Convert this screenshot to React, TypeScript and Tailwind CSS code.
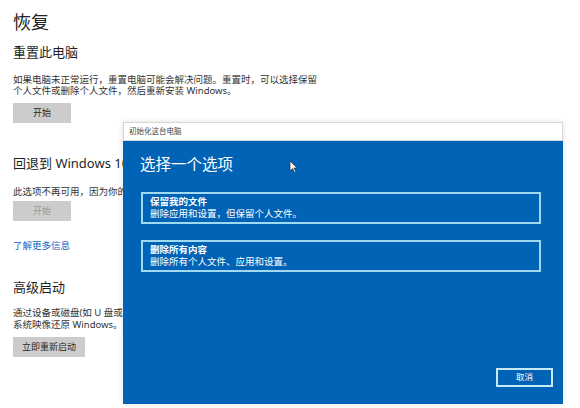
import React from 'react';

const FONT = "font-['Noto_Sans','Noto_Sans_CJK_SC',sans-serif]";

const GrayButton: React.FC<{ label: string; disabled?: boolean; width: string }> = ({ label, disabled, width }) => (
  <div
    className={`${width} h-[20px] flex items-center justify-center bg-[#cccccc] text-[9px] leading-none ${
      disabled ? 'text-[#9a9a9a]' : 'text-[#2a2a2a]'
    }`}
  >
    {label}
  </div>
);

const OptionCard: React.FC<{ title: string; desc: string; mt: string }> = ({ title, desc, mt }) => (
  <div className={`${mt} w-[400px] h-[32px] border-2 border-[#9fd9f2] px-[7px] flex flex-col justify-center`}>
    <div className="text-[9.5px] leading-[12px] font-bold text-white whitespace-nowrap">{title}</div>
    <div className="text-[9.5px] leading-[12px] text-white whitespace-nowrap">{desc}</div>
  </div>
);

// "Initialize this PC" window floating over the recovery page
const ResetDialog: React.FC = () => (
  <div className="absolute left-[123px] top-[122px] w-[440px] h-[282px] flex flex-col shadow-[0_0_6px_rgba(0,0,0,0.12)]">
    <div className="h-[19px] bg-white border border-[#d6d6d6] flex items-center pl-[5px]">
      <span className="text-[7.5px] text-[#444] whitespace-nowrap">初始化这台电脑</span>
    </div>
    <div className="relative flex-1 bg-[#0063b5] pl-[18px] flex flex-col">
      <div className="mt-[13px] ml-[-1px] text-[15.5px] leading-[20px] text-white">选择一个选项</div>
      <OptionCard mt="mt-[18px]" title="保留我的文件" desc="删除应用和设置，但保留个人文件。" />
      <OptionCard mt="mt-[16px]" title="删除所有内容" desc="删除所有个人文件、应用和设置。" />
      <div className="flex-1" />
      <div className="mb-[17px] mr-[10px] self-end w-[57px] h-[19px] border-2 border-[#c7eaf8] flex items-center justify-center text-[8.5px] text-white">
        取消
      </div>
      {/* mouse pointer */}
      <svg className="absolute left-[166px] top-[19px]" width="9" height="13" viewBox="0 0 9 13">
        <path d="M1 1 L1 11 L3.5 8.6 L5.4 12.4 L6.8 11.7 L5 8 L8.2 8 Z" fill="#f4f4f4" stroke="#222" strokeWidth="0.6" />
      </svg>
    </div>
  </div>
);

export default function App() {
  return (
    <div className={`relative w-[580px] h-[408px] overflow-hidden bg-white ${FONT}`}>
      <div className="pl-[13px] flex flex-col items-start text-[#1f1f1f]">
        <h1 className="mt-[11px] text-[18px] leading-[22px] text-[#222]">恢复</h1>

        <h2 className="mt-[11px] text-[13px] leading-[16px]">重置此电脑</h2>
        <p className="mt-[13.5px] text-[9.5px] leading-[11.5px] text-[#333] whitespace-nowrap">
          如果电脑未正常运行，重置电脑可能会解决问题。重置时，可以选择保留
          <br />
          个人文件或删除个人文件，然后重新安装 Windows。
        </p>
        <div className="mt-[6px]">
          <GrayButton label="开始" width="w-[58px]" />
        </div>

        <h2 className="mt-[32px] text-[13px] leading-[16px]">回退到 Windows 10 之前的版本</h2>
        <p className="mt-[15.5px] text-[9.5px] leading-[11px] text-[#333] whitespace-nowrap">
          此选项不再可用，因为你的电脑升级到 Windows 10 已超过 10 天。
        </p>
        <div className="mt-[3.5px]">
          <GrayButton label="开始" width="w-[58px]" disabled />
        </div>
        <a className="mt-[19.5px] text-[9.5px] leading-[11px] text-[#0a64c8]">了解更多信息</a>

        <h2 className="mt-[27.5px] text-[13px] leading-[16px]">高级启动</h2>
        <p className="mt-[12px] text-[9.5px] leading-[12px] text-[#333] whitespace-nowrap">
          通过设备或磁盘(如 U 盘或 DVD)启动，更改 Windows 启动设置，或者从
          <br />
          系统映像还原 Windows。这将重新启动电脑。
        </p>
        <div className="mt-[6px]">
          <GrayButton label="立即重新启动" width="w-[72px]" />
        </div>
      </div>

      <ResetDialog />
    </div>
  );
}
